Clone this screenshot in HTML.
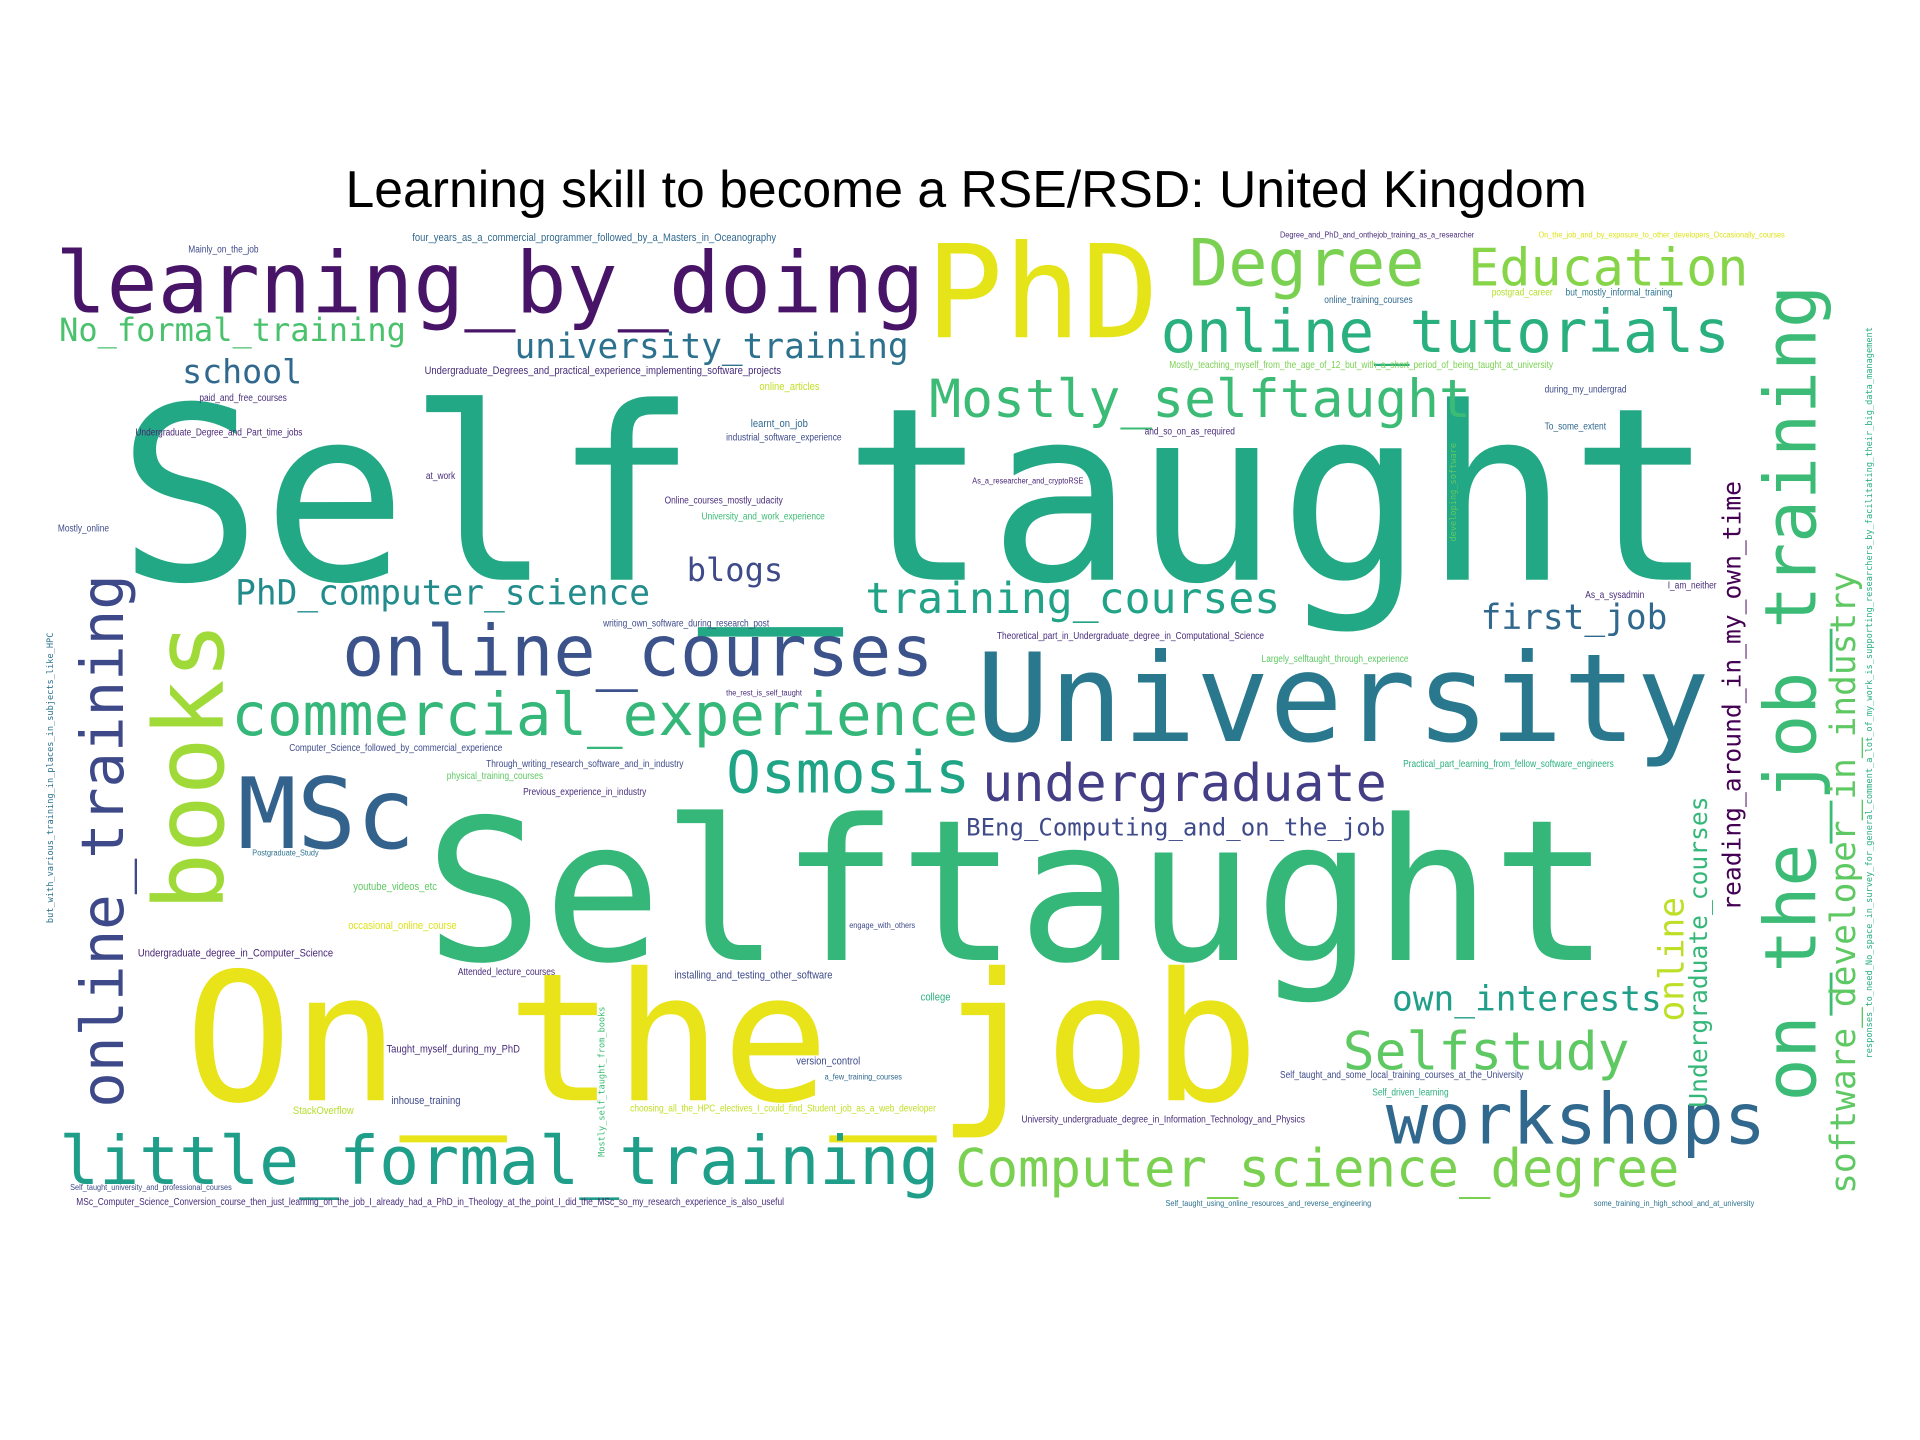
<!DOCTYPE html>
<html><head><meta charset="utf-8">
<style>
html,body{margin:0;padding:0;background:#fff;}
body{width:1920px;height:1440px;overflow:hidden;position:relative;}
#c{position:absolute;left:0;top:0;width:1560px;height:1170px;transform:scale(1.230769);transform-origin:0 0;}
#c div{position:absolute;white-space:nowrap;line-height:1;font-family:"DejaVu Sans Mono","Liberation Mono",monospace;}
#c div.v{transform:rotate(-90deg);transform-origin:0 0;}
#c div.s{font-family:"Liberation Sans Narrow","Liberation Sans",sans-serif;transform:scaleX(0.85);transform-origin:0 0;}
#t{position:absolute;left:0;width:1570px;text-align:center;top:133px;font:42px "Liberation Sans",sans-serif;color:#000;line-height:1;}
</style></head><body>
<div id="c">
<div id="t" style="position:absolute;font-family:'Liberation Sans',sans-serif">Learning skill to become a RSE/RSD: United Kingdom</div>

<div style="left:95px;top:306px;font-size:196px;color:#22a884">Self_taught</div>
<div style="left:345px;top:645px;font-size:160px;color:#35b779">Selftaught</div>
<div style="left:150px;top:772px;font-size:145px;color:#e8e419">On_the_job</div>
<div style="left:45px;top:197px;font-size:69px;color:#481467">learning_by_doing</div>
<div style="left:752px;top:186px;font-size:105px;color:#e5e419">PhD</div>
<div style="left:966px;top:188px;font-size:53px;color:#7ad151">Degree</div>
<div style="left:1193px;top:197px;font-size:42px;color:#86d549">Education</div>
<div style="left:943px;top:246px;font-size:48px;color:#2ab07f">online_tutorials</div>
<div style="left:48px;top:256px;font-size:26px;color:#4ac16d">No_formal_training</div>
<div style="left:418px;top:268px;font-size:28px;color:#2c728e">university_training</div>
<div style="left:148px;top:289px;font-size:27px;color:#31688e">school</div>
<div style="left:755px;top:304px;font-size:43px;color:#3bbb75">Mostly_selftaught</div>
<div style="left:558px;top:451px;font-size:26px;color:#3e4a89">blogs</div>
<div style="left:191px;top:468px;font-size:28px;color:#228c8d">PhD_computer_science</div>
<div style="left:703px;top:470px;font-size:35px;color:#20a386">training_courses</div>
<div style="left:1203px;top:488px;font-size:28px;color:#31688e">first_job</div>
<div style="left:278px;top:502px;font-size:57px;color:#3b528b">online_courses</div>
<div style="left:793px;top:519px;font-size:99px;color:#2a788e">University</div>
<div style="left:188px;top:557px;font-size:48px;color:#35b779">commercial_experience</div>
<div style="left:193px;top:622px;font-size:80px;color:#33638d">MSc</div>
<div style="left:590px;top:605px;font-size:47px;color:#20a486">Osmosis</div>
<div style="left:798px;top:616px;font-size:42px;color:#433e85">undergraduate</div>
<div style="left:785px;top:663px;font-size:19.5px;color:#3e4a89">BEng_Computing_and_on_the_job</div>
<div style="left:48px;top:917px;font-size:54px;color:#1f9e89">little_formal_training</div>
<div style="left:776px;top:930px;font-size:42.5px;color:#7ad151">Computer_science_degree</div>
<div style="left:1126px;top:882px;font-size:57px;color:#31688e">workshops</div>
<div style="left:1091px;top:834px;font-size:43px;color:#5ec962">Selfstudy</div>
<div style="left:1131px;top:798px;font-size:28px;color:#1f9e89">own_interests</div>

<div class="v" style="left:116px;top:740px;font-size:78px;color:#a0da39">books</div>
<div class="v" style="left:60px;top:900px;font-size:48px;color:#3e4989">online_training</div>
<div class="v" style="left:1426px;top:895px;font-size:58px;color:#3bbb75">on_the_job_training</div>
<div class="v" style="left:1397px;top:740px;font-size:20px;color:#440154">reading_around_in_my_own_time</div>
<div class="v" style="left:1484px;top:970px;font-size:28px;color:#5ec962">software_developer_in_industry</div>
<div class="v" style="left:1370px;top:900px;font-size:20px;color:#35b779">Undergraduate_courses</div>
<div class="v" style="left:1345px;top:830px;font-size:28px;color:#bddf26">online</div>
<div class="v" style="left:38px;top:750px;font-size:7px;color:#2c728e">but_with_various_training_in_places_in_subjects_like_HPC</div>
<div class="v" style="left:1516px;top:860px;font-size:7px;color:#2ab07f">responses_to_need_No_space_in_survey_for_general_comment_a_lot_of_my_work_is_supporting_researchers_by_facilitating_their_big_data_management</div>
<div class="v" style="left:1178px;top:440px;font-size:7px;color:#5ec962">developing_software</div>
<div class="v" style="left:486px;top:940px;font-size:7px;color:#3bbb75">Mostly_self_taught_from_books</div>

<div class="s" style="left:335px;top:189px;font-size:9px;color:#31688e">four_years_as_a_commercial_programmer_followed_by_a_Masters_in_Oceanography</div>
<div class="s" style="left:153px;top:199px;font-size:8px;color:#3e4a89">Mainly_on_the_job</div>
<div class="s" style="left:1040px;top:188px;font-size:7px;color:#472c7a">Degree_and_PhD_and_onthejob_training_as_a_researcher</div>
<div class="s" style="left:1250px;top:188px;font-size:7px;color:#dde318">On_the_job_and_by_exposure_to_other_developers_Occasionally_courses</div>
<div class="s" style="left:1076px;top:240px;font-size:8px;color:#31688e">online_training_courses</div>
<div class="s" style="left:1212px;top:234px;font-size:8px;color:#b5de2b">postgrad_career</div>
<div class="s" style="left:1272px;top:234px;font-size:8px;color:#2c728e">but_mostly_informal_training</div>
<div class="s" style="left:345px;top:297px;font-size:9px;color:#472c7a">Undergraduate_Degrees_and_practical_experience_implementing_software_projects</div>
<div class="s" style="left:950px;top:293px;font-size:8px;color:#7ad151">Mostly_teaching_myself_from_the_age_of_12_but_with_a_short_period_of_being_taught_at_university</div>
<div class="s" style="left:162px;top:320px;font-size:8px;color:#472c7a">paid_and_free_courses</div>
<div class="s" style="left:617px;top:310px;font-size:9px;color:#c2df23">online_articles</div>
<div class="s" style="left:110px;top:348px;font-size:8px;color:#482475">Undergraduate_Degree_and_Part_time_jobs</div>
<div class="s" style="left:610px;top:340px;font-size:9px;color:#31688e">learnt_on_job</div>
<div class="s" style="left:590px;top:352px;font-size:8px;color:#3e4a89">industrial_software_experience</div>
<div class="s" style="left:930px;top:347px;font-size:8px;color:#472c7a">and_so_on_as_required</div>
<div class="s" style="left:1255px;top:313px;font-size:8px;color:#3e4a89">during_my_undergrad</div>
<div class="s" style="left:1255px;top:343px;font-size:8px;color:#31688e">To_some_extent</div>
<div class="s" style="left:346px;top:383px;font-size:8px;color:#472c7a">at_work</div>
<div class="s" style="left:47px;top:426px;font-size:8px;color:#3e4a89">Mostly_online</div>
<div class="s" style="left:540px;top:403px;font-size:8px;color:#472c7a">Online_courses_mostly_udacity</div>
<div class="s" style="left:570px;top:416px;font-size:8px;color:#3bbb75">University_and_work_experience</div>
<div class="s" style="left:790px;top:388px;font-size:7px;color:#482475">As_a_researcher_and_cryptoRSE</div>
<div class="s" style="left:1288px;top:480px;font-size:8px;color:#472c7a">As_a_sysadmin</div>
<div class="s" style="left:1355px;top:472px;font-size:8px;color:#472c7a">I_am_neither</div>
<div class="s" style="left:490px;top:503px;font-size:8px;color:#3e4a89">writing_own_software_during_research_post</div>
<div class="s" style="left:810px;top:513px;font-size:8px;color:#472c7a">Theoretical_part_in_Undergraduate_degree_in_Computational_Science</div>
<div class="s" style="left:1025px;top:532px;font-size:8px;color:#5ec962">Largely_selftaught_through_experience</div>
<div class="s" style="left:235px;top:604px;font-size:8px;color:#3e4a89">Computer_Science_followed_by_commercial_experience</div>
<div class="s" style="left:395px;top:617px;font-size:8px;color:#3e4a89">Through_writing_research_software_and_in_industry</div>
<div class="s" style="left:363px;top:627px;font-size:8px;color:#5ec962">physical_training_courses</div>
<div class="s" style="left:425px;top:640px;font-size:8px;color:#472c7a">Previous_experience_in_industry</div>
<div class="s" style="left:1140px;top:617px;font-size:8px;color:#2ab07f">Practical_part_learning_from_fellow_software_engineers</div>
<div class="s" style="left:287px;top:716px;font-size:9px;color:#5ec962">youtube_videos_etc</div>
<div class="s" style="left:283px;top:748px;font-size:9px;color:#dde318">occasional_online_course</div>
<div class="s" style="left:112px;top:770px;font-size:9px;color:#482475">Undergraduate_degree_in_Computer_Science</div>
<div class="s" style="left:372px;top:786px;font-size:8px;color:#472c7a">Attended_lecture_courses</div>
<div class="s" style="left:548px;top:788px;font-size:9px;color:#3e4a89">installing_and_testing_other_software</div>
<div class="s" style="left:314px;top:848px;font-size:9px;color:#472c7a">Taught_myself_during_my_PhD</div>
<div class="s" style="left:647px;top:858px;font-size:9px;color:#3e4a89">version_control</div>
<div class="s" style="left:318px;top:890px;font-size:9px;color:#3e4a89">inhouse_training</div>
<div class="s" style="left:238px;top:898px;font-size:9px;color:#b5de2b">StackOverflow</div>
<div class="s" style="left:512px;top:897px;font-size:8px;color:#c2df23">choosing_all_the_HPC_electives_I_could_find_Student_job_as_a_web_developer</div>
<div class="s" style="left:830px;top:906px;font-size:8px;color:#472c7a">University_undergraduate_degree_in_Information_Technology_and_Physics</div>
<div class="s" style="left:1040px;top:870px;font-size:8px;color:#3e4a89">Self_taught_and_some_local_training_courses_at_the_University</div>
<div class="s" style="left:1115px;top:884px;font-size:8px;color:#2ab07f">Self_driven_learning</div>
<div class="s" style="left:57px;top:962px;font-size:7px;color:#3e4a89">Self_taught_university_and_professional_courses</div>
<div class="s" style="left:62px;top:973px;font-size:8px;color:#472c7a">MSc_Computer_Science_Conversion_course_then_just_learning_on_the_job_I_already_had_a_PhD_in_Theology_at_the_point_I_did_the_MSc_so_my_research_experience_is_also_useful</div>
<div class="s" style="left:947px;top:975px;font-size:7px;color:#2c728e">Self_taught_using_online_resources_and_reverse_engineering</div>
<div class="s" style="left:1295px;top:975px;font-size:7px;color:#2c728e">some_training_in_high_school_and_at_university</div>
<div class="s" style="left:748px;top:806px;font-size:9px;color:#2ab07f">college</div>
<div class="s" style="left:670px;top:872px;font-size:7px;color:#31688e">a_few_training_courses</div>
<div class="s" style="left:590px;top:560px;font-size:7px;color:#472c7a">the_rest_is_self_taught</div>
<div class="s" style="left:205px;top:690px;font-size:7px;color:#2c728e">Postgraduate_Study</div>
<div class="s" style="left:690px;top:749px;font-size:7px;color:#3e4a89">engage_with_others</div>
</div>
</body></html>
